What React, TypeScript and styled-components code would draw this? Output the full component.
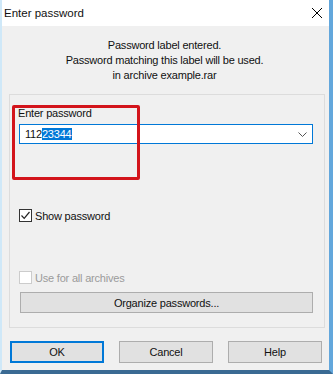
import React from "react";
import styled, { createGlobalStyle } from "styled-components";

const Global = createGlobalStyle`
  html, body { margin: 0; padding: 0; background: #ffffff; }
  * { box-sizing: border-box; }
`;

const FONT = `"Liberation Sans", Arial, sans-serif`;

const Window = styled.div`
  position: relative;
  width: 333px;
  height: 374px;
  display: flex;
  flex-direction: column;
  border-left: 2px solid #cfe8f8;
  border-right: 4px solid #63a7dc;
  border-bottom: 4px solid #3a6a93;
  font-family: ${FONT};
  font-size: 11px;
  letter-spacing: -0.2px;
  color: #111;
  overflow: hidden;
`;

const TitleBar = styled.div`
  height: 26px;
  flex: none;
  background: #ffffff;
  display: flex;
  align-items: center;
  justify-content: space-between;
  padding: 0 6px 0 2px;
  font-size: 11.5px;
  letter-spacing: 0;
`;

const Title = styled.span`
  line-height: 16px;
`;

const Body = styled.div`
  flex: 1;
  background: #f0f0f0;
  display: flex;
  flex-direction: column;
  padding: 12px 0 0 0;
`;

const Message = styled.div`
  text-align: center;
  line-height: 15px;
  padding-right: 2px;
`;

const Group = styled.div`
  margin: 11px 4px 0 7px;
  border: 1px solid #dcdcdc;
  padding: 10px 11px 14px 8px;
  display: flex;
  flex-direction: column;
`;

const Label = styled.div`
  line-height: 16px;
`;

const Combo = styled.div`
  margin: 3px 0 0 1px;
  height: 20px;
  border: 1px solid #0078d7;
  background: #fff;
  display: flex;
  align-items: center;
  justify-content: space-between;
  padding: 0 5px 0 5px;
`;

const ComboText = styled.span`
  line-height: 12px;
`;

const Selected = styled.span`
  display: inline-block;
  background: #0078d7;
  color: #fff;
  height: 12px;
  line-height: 12px;
`;

const CheckRow = styled.label<{ $top: number; $disabled?: boolean }>`
  margin: ${(p) => p.$top}px 0 0 1px;
  height: 13px;
  display: flex;
  align-items: center;
  gap: 3px;
  color: ${(p) => (p.$disabled ? "#9b9b9b" : "#111")};
`;

const Box = styled.span<{ $disabled?: boolean }>`
  width: 13px;
  height: 13px;
  flex: none;
  border: 1px solid ${(p) => (p.$disabled ? "#cccccc" : "#333333")};
  background: #fff;
  display: flex;
  align-items: center;
  justify-content: center;
`;

const WideButton = styled.div`
  margin: 8px 0 0 2px;
  height: 21px;
  border: 1px solid #adadad;
  background: #e1e1e1;
  display: flex;
  align-items: center;
  justify-content: center;
`;

const ButtonRow = styled.div`
  display: flex;
  margin: 13px 0 0 8px;
  gap: 15px;
`;

const Button = styled.div<{ $primary?: boolean }>`
  width: 94px;
  height: 22px;
  border: ${(p) => (p.$primary ? "2px solid #0078d7" : "1px solid #adadad")};
  background: #e1e1e1;
  display: flex;
  align-items: center;
  justify-content: center;
`;

const Annotation = styled.div`
  position: absolute;
  left: 10px;
  top: 105px;
  width: 128px;
  height: 75px;
  border: 3px solid #d3141b;
  border-radius: 2px;
  pointer-events: none;
`;

export default function App() {
  return (
    <>
      <Global />
      <Window>
        <TitleBar>
          <Title>Enter password</Title>
          <svg width="12" height="12" viewBox="0 0 12 12">
            <path d="M1 1 L11 11 M11 1 L1 11" stroke="#000" strokeWidth="1" fill="none" />
          </svg>
        </TitleBar>
        <Body>
          <Message>
            <div>Password label entered.</div>
            <div>Password matching this label will be used.</div>
            <div>in archive example.rar</div>
          </Message>
          <Group>
            <Label>Enter password</Label>
            <Combo>
              <ComboText>
                112<Selected>23344</Selected>
              </ComboText>
              <svg width="9" height="5" viewBox="0 0 9 5">
                <path d="M0.5 0.5 L4.5 4.5 L8.5 0.5" stroke="#555" strokeWidth="1" fill="none" />
              </svg>
            </Combo>
            <CheckRow $top={65}>
              <Box>
                <svg width="11" height="11" viewBox="0 0 11 11">
                  <path d="M1.5 5.5 L4.2 8.3 L9.5 2" stroke="#222" strokeWidth="1.2" fill="none" />
                </svg>
              </Box>
              Show password
            </CheckRow>
            <CheckRow $top={49} $disabled>
              <Box $disabled />
              Use for all archives
            </CheckRow>
            <WideButton>Organize passwords...</WideButton>
          </Group>
          <ButtonRow>
            <Button $primary>OK</Button>
            <Button>Cancel</Button>
            <Button>Help</Button>
          </ButtonRow>
        </Body>
        <Annotation />
      </Window>
    </>
  );
}
